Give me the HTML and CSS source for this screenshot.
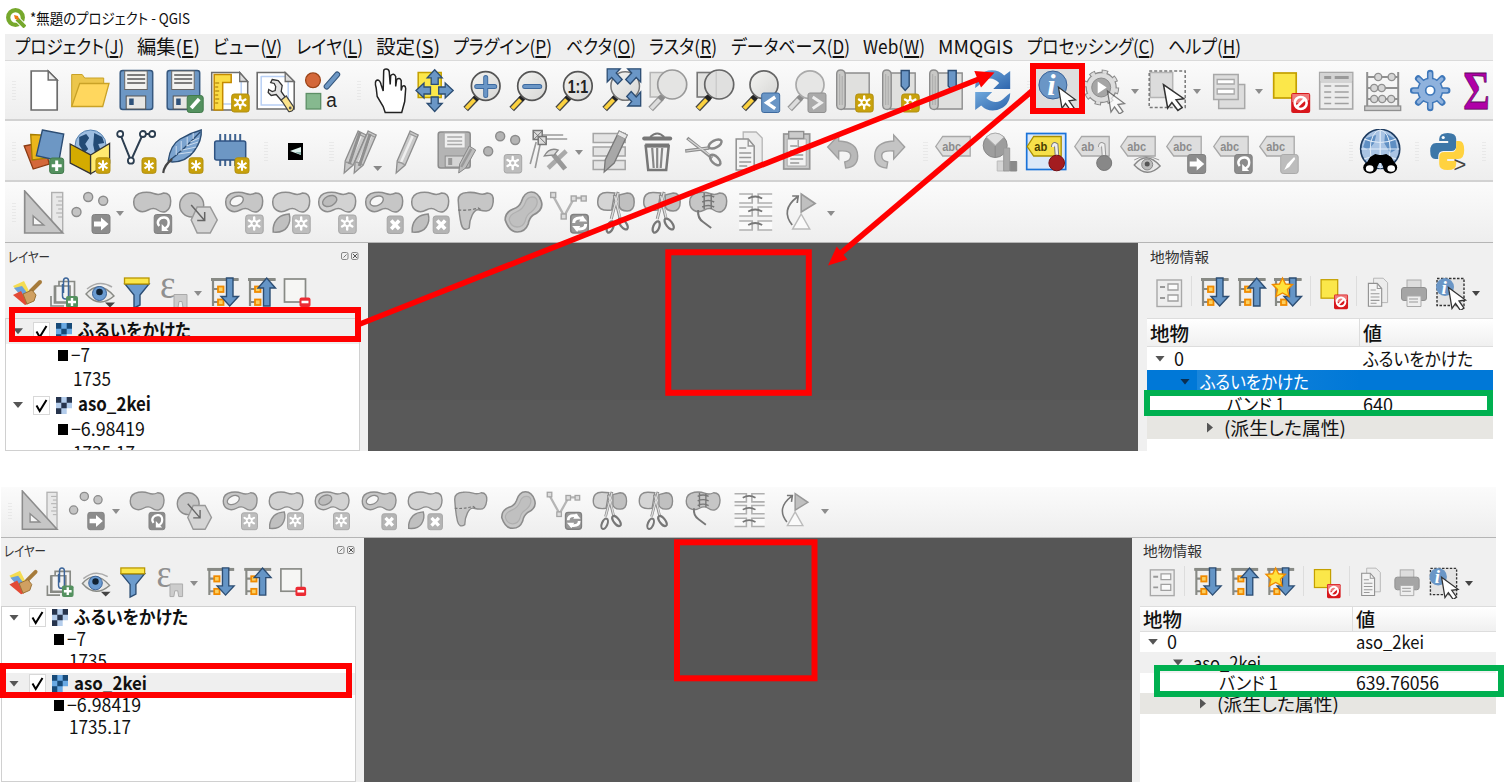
FILE: index.html
```html
<!DOCTYPE html>
<html lang="ja">
<head>
<meta charset="utf-8">
<title>QGIS</title>
<link rel="stylesheet" href="styles.css">
</head>
<body>
<svg class="defs" width="0" height="0">
<defs>
<linearGradient id="lens" x1="0" y1="0" x2="1" y2="1"><stop offset="0" stop-color="#f4f4f2"/><stop offset="1" stop-color="#d6d6d4"/></linearGradient>
<linearGradient id="ref" x1="0" y1="0" x2="1" y2="1"><stop offset="0" stop-color="#6fa8dc"/><stop offset="1" stop-color="#2f66ad"/></linearGradient>
<g id="gear8"><path d="M9 3v12M3.8 6l10.4 6M14.200 6l-10.400 6" stroke="#fff" stroke-width="2.4" stroke-linecap="round"/><circle cx="9" cy="9" r="3.600" fill="#fff"/></g>
<g id="b-new"><rect x=".5" y=".5" width="17.500" height="18" rx="2.500" fill="#c9a20c" stroke="#b08e10"/><use href="#gear8"/><circle cx="9" cy="9" r="1.700" fill="#c9a20c"/></g>
<g id="b-star"><rect x=".5" y=".5" width="14" height="15.500" rx="2.500" fill="#c9a20c" stroke="#b08e10"/><path d="M7.500 3v10.500M3 5.500l9 5.500M12 5.500l-9 5.500" stroke="#fff" stroke-width="2"/></g>
<g id="b-gnew"><rect x=".5" y=".5" width="17.500" height="18.500" rx="2.500" fill="#bdbdbd" stroke="#a6a6a6"/><use href="#gear8"/><circle cx="9" cy="9" r="1.700" fill="#bdbdbd"/></g>
<g id="b-gx"><rect x=".5" y=".5" width="16" height="17.500" rx="2.500" fill="#b4b4b4" stroke="#a6a6a6"/><path d="M4.500 5l8 8.500M12.500 5l-8 8.500" stroke="#fff" stroke-width="3.600"/></g>
<g id="b-move"><rect x=".5" y=".5" width="18" height="19" rx="2.500" fill="#8c8c8c" stroke="#808080"/><path d="M2.500 7.500h7v-4l7.500 6.500-7.500 6.500v-4h-7z" fill="#fff"/></g>
<g id="b-rot"><rect x=".5" y=".5" width="17.500" height="19" rx="2.500" fill="#8c8c8c" stroke="#808080"/><path d="M5.500 12q-2.500-3-.5-6t6-2.500 4 5-4 6" fill="none" stroke="#fff" stroke-width="2.400"/><path d="M8 10v7h7z" fill="#fff"/></g>
<g id="b-green"><rect x=".5" y=".5" width="14" height="15.500" rx="2.500" fill="#54915f" stroke="#427a4c"/><path d="M7.500 3v10.500M2.500 8.200h10" stroke="#fff" stroke-width="3"/></g>
<g id="b-red"><rect x="0" y="0" width="19" height="20" rx="2" fill="#d8171c"/><path d="M1 9q8 3 17-2v-6H1z" fill="#ef7b7b"/><circle cx="9.500" cy="10" r="6" fill="none" stroke="#fff" stroke-width="2.600"/><path d="M5.500 14l8-8" stroke="#fff" stroke-width="2.600"/></g>
<g id="cursor"><path d="M0 0l17 12.500-6.500 1 5 7-3.500 2.500-5-7-3.500 5z" fill="#fff" stroke="#333" stroke-width="1.300"/></g>
<g id="handle"><path d="M17.500 29.500L6.500 41" stroke="#444" stroke-width="6.400"/><path d="M15.500 31.500L7 40.500" stroke="#fcd23f" stroke-width="4"/><path d="M19.500 27.500l-4 4" stroke="#222" stroke-width="6"/></g>
<g id="ghandle"><path d="M17.500 29.500L6.500 41" stroke="#999" stroke-width="6.400"/><path d="M15.500 31.500L7 40.500" stroke="#ddd" stroke-width="4"/><path d="M19.500 27.500l-4 4" stroke="#8c8c8c" stroke-width="6"/></g>
<g id="floppy"><rect x="7" y="2.500" width="32.500" height="39" rx="2.500" fill="#6d97c4" stroke="#36587f" stroke-width="1.500"/><rect x="11.500" y="3" width="22.500" height="18.500" fill="#f2f2f0" stroke="#666"/><path d="M14 7h18M14 11h18M14 15h18" stroke="#555" stroke-width="1.700"/><rect x="13" y="28" width="19.500" height="13" fill="#e6e6e4" stroke="#555"/><rect x="16" y="30.500" width="4.500" height="6.500" fill="#2f527a"/></g>
<g id="scroll"><path d="M14 5h25v36H14z" fill="#e0e0de" stroke="#8c8c8c" stroke-width="1.400"/><path d="M6.500 6q0-4 4-4t4.500 4v31q0 4.500-4 4.500t-4.500-4z" fill="#c8c8c6" stroke="#8c8c8c" stroke-width="1.400"/><path d="M9.500 6v31M12 8v29" stroke="#aaa"/></g>
<path id="tag" d="M5.500 17.500l7-10h27.500v19.500h-27.500z" fill="#dedede" stroke="#a8a8a8" stroke-width="1.300"/>
<path id="blob" d="M4.500 12q0-8 9-9.500 6-1 11 1t10-.5q7 0 7 8t-5 10.500q-4 1.500-8-1.500t-9.500 0-10 .5-4.500-8.500z" stroke="#8c8c8c" stroke-width="1.500"/>
<g id="scis"><path d="M25 2l-7 27M21 5l6 24" stroke="#8c8c8c" stroke-width="3"/><path d="M25 3l-7 26M21.500 6l5.500 22" stroke="#ddd" stroke-width="1.400"/><ellipse cx="17" cy="37" rx="3" ry="6" transform="rotate(22 17 37)" fill="none" stroke="#777" stroke-width="2.300"/><ellipse cx="30" cy="34" rx="3" ry="6.500" transform="rotate(-38 30 34)" fill="none" stroke="#777" stroke-width="2.300"/></g>
<g id="pencil"><path d="M25 2l8 4-13 30-9 8 1-12z" fill="#c9c9c9" stroke="#8e8e8e" stroke-width="1.300"/><path d="M27.500 7l-12 27" stroke="#eee" stroke-width="2.500"/><path d="M12 33q4 0 8 3M24 4.500l8.500 4" fill="none" stroke="#999" stroke-width="1.300"/></g>
<g id="treebg"><path d="M3 3.500h27.500M5 4v26M5 13h5M5 26h5" stroke="#888a85" stroke-width="2.200" fill="none"/><path d="M3 3.500h27.500" stroke="#888a85" stroke-width="3"/><rect x="10" y="10.500" width="5.500" height="5.500" fill="#fcd060" stroke="#f08a00" stroke-width="1.800"/><rect x="10" y="23.500" width="5.500" height="5.500" fill="#fcd060" stroke="#f08a00" stroke-width="1.800"/></g>
<path id="adown" d="M18.500 2h6.500v18.500h5.500l-8.800 9.500-8.700-9.500h5.500z" fill="#6595c6" stroke="#2c4d73" stroke-width="1.400"/>
<g id="pages"><path d="M17 3h13l6 6v27H17z" fill="#ececec" stroke="#b5b5b5" stroke-width="1.300"/><path d="M10 10h12l6 7v24H10z" fill="#f4f4f4" stroke="#909090" stroke-width="1.500"/><path d="M22 10v7h6M13 19h7M13 24h12M13 28.500h12M13 33h12M13 37h8" fill="none" stroke="#999" stroke-width="1.400"/></g>
</defs>

<symbol id="new" viewBox="0 0 46 46"><path d="M10 3h17l9 9v30H10z" fill="#fff" stroke="#6c6c6c" stroke-width="1.700"/><path d="M27 3v9h9z" fill="#eee" stroke="#6c6c6c" stroke-width="1.500"/></symbol>
<symbol id="open" viewBox="0 0 46 46"><path d="M4.500 38V6.500h10.500l2.500 3.500h19v6L33 38z" fill="#ecc64c" stroke="#c9a227"/><path d="M12.500 15.500h29.300L35.500 38.500H4.500z" fill="#ffd75e" stroke="#c9a227" stroke-width="1.300"/></symbol>
<symbol id="save" viewBox="0 0 46 46"><use href="#floppy"/></symbol>
<symbol id="saveas" viewBox="0 0 46 46"><use href="#floppy"/><rect x="27" y="27.500" width="16" height="17" rx="2.500" fill="#54915f" stroke="#427a4c"/><path d="M31 40l8-9" stroke="#fff" stroke-width="3.800"/></symbol>
<symbol id="layout" viewBox="0 0 46 46"><path d="M5.500 4.500h28l8 9V42h-36z" fill="#fff" stroke="#6c6c6c" stroke-width="1.500"/><path d="M9 36h26V8" fill="none" stroke="#b9d0f5" stroke-width="1.500"/><path d="M33.500 4.500v9h8z" fill="#ddd" stroke="#6c6c6c" stroke-width="1.300"/><path d="M8 6.500h17v8h-8.500V42H8z" fill="#fbdc45" stroke="#c48a00" stroke-width="1.500"/><path d="M9 15h4M9 19h3M9 23h4M9 27h3M9 31h4M9 35h3" stroke="#a07000"/><use href="#b-new" x="25" y="25.500"/></symbol>
<symbol id="wrench" viewBox="0 0 46 46"><path d="M5 4.500h28l9 9V41H5z" fill="#fff" stroke="#6c6c6c" stroke-width="1.600"/><path d="M9 8.500h24M9 8v29h27V14" fill="none" stroke="#b9d0f5" stroke-width="1.500"/><path d="M33 4.500v9h9z" fill="#ddd" stroke="#6c6c6c" stroke-width="1.300"/><path d="M20 11.500l6 1 4 5-1 6 5 7-4 3-6-7-5 1-3-3 .5-3 3.500 2 3-1 .5-4-1.500-3-3.500-1z" fill="#e4e4e4" stroke="#333" stroke-width="1.300"/><path d="M29 32l5-4 7.500 11q0 5-5 4.500z" fill="#fbe38b" stroke="#444" stroke-width="1.300"/><circle cx="38" cy="40" r="1.400" fill="#555"/></symbol>
<symbol id="style" viewBox="0 0 46 46"><circle cx="13.800" cy="12.300" r="7.400" fill="#d4683a" stroke="#9c4418" stroke-width="1.300"/><path d="M27.500 18.500L38 6.500" stroke="#34567c" stroke-width="6" stroke-linecap="round"/><path d="M27.500 18.500L38 6.500" stroke="#6d97c4" stroke-width="4" stroke-linecap="round"/><rect x="7" y="25.500" width="14.500" height="15.500" fill="#86b98f" stroke="#5d8f66" stroke-width="1.300"/><text x="27" y="38.500" font-family="Liberation Sans" font-size="20" fill="#222" textLength="10.500" lengthAdjust="spacingAndGlyphs">a</text></symbol>
<symbol id="hand" viewBox="0 0 46 46"><path d="M10 20q-2-7 1-8 3 0 4 5l2 6 .500-20q0-2 2.500-2t3 2.500l1 13 .5-9q3-3 5 1v10l1-7q3-2.500 4.500 1v10l1-4q3-2 3.500 2l-1 13-3 11H19l-2-6-6-10z" fill="#fff" stroke="#222" stroke-width="1.500"/></symbol>
<symbol id="pan" viewBox="0 0 46 46"><rect x="6" y="4.500" width="23" height="25" fill="#fbe74a" stroke="#c4a000" stroke-width="1.500"/><g fill="#6a96c6" stroke="#2c4d73" stroke-width="1.300"><path d="M22.500 1.800l7.500 8h-4v6.500h-7V9.800h-4z"/><path d="M22.500 43.500l7.500-8h-4v-6.500h-7v6.500h-4z"/><path d="M3.800 22.500l8-7.500v4h6.500v7h-6.500v4z"/><path d="M41 22.500l-8-7.500v4h-6.500v7H33v4z"/></g></symbol>
<symbol id="zin" viewBox="0 0 46 46"><use href="#handle"/><circle cx="26.500" cy="18" r="14.300" fill="url(#lens)" stroke="#555" stroke-width="1.700"/><path d="M26.500 9.500v18M17.500 18.500h18" stroke="#3d6a9f" stroke-width="5" stroke-linecap="round"/><path d="M26.500 9.500v18M17.500 18.500h18" stroke="#6a96c6" stroke-width="3.200" stroke-linecap="round"/></symbol>
<symbol id="zout" viewBox="0 0 46 46"><use href="#handle"/><circle cx="26.800" cy="18" r="14.300" fill="url(#lens)" stroke="#555" stroke-width="1.700"/><path d="M19.500 18.500h15" stroke="#3d6a9f" stroke-width="5" stroke-linecap="round"/><path d="M19.500 18.500h15" stroke="#6a96c6" stroke-width="3.200" stroke-linecap="round"/></symbol>
<symbol id="zone" viewBox="0 0 46 46"><use href="#handle"/><circle cx="26.700" cy="18" r="14.300" fill="url(#lens)" stroke="#555" stroke-width="1.700"/><text x="16.500" y="24.500" font-family="Liberation Sans" font-weight="bold" font-size="19" fill="#222" textLength="20.500" lengthAdjust="spacingAndGlyphs">1:1</text></symbol>
<symbol id="zfull" viewBox="0 0 46 46"><use href="#handle"/><circle cx="27" cy="18" r="14.300" fill="url(#lens)" stroke="#777" stroke-width="1.500"/><g fill="#6a96c6" stroke="#2c4d73" stroke-width="1.300"><path d="M9 .8h13l-4 4.200 6 6.500-4.500 4.500-6-6.500-4.500 4.500z"/><path d="M42.500.8h-13l4 4.200-6 6.500 4.500 4.500 6-6.500 4.500 4.500z"/><path d="M42.500 38h-13l4-4.500-5-5 4.500-5 5 5.500 4.500-5z"/></g></symbol>
<symbol id="zsel" viewBox="0 0 46 46"><rect x="6" y="4.500" width="19" height="24.500" fill="#e2e2e0" stroke="#b5b5b5" stroke-width="1.500"/><use href="#ghandle"/><circle cx="28" cy="16.500" r="14.500" fill="#e4e4e3" stroke="#999" stroke-width="1.700"/></symbol>
<symbol id="zlay" viewBox="0 0 46 46"><rect x="6" y="4.500" width="19" height="24.500" fill="#e2e2e0" stroke="#777" stroke-width="1.600"/><use href="#handle"/><circle cx="28" cy="16.500" r="14.500" fill="#e0e0df" stroke="#666" stroke-width="1.700"/><path d="M25 3v27" stroke="#c2c2c2"/></symbol>
<symbol id="zlast" viewBox="0 0 46 46"><use href="#handle"/><circle cx="26.800" cy="16.800" r="14" fill="url(#lens)" stroke="#666" stroke-width="1.700"/><rect x="24.500" y="25" width="18" height="19.500" rx="2" fill="#6a96c6" stroke="#3d6a9f"/><path d="M38 29l-8.500 5.800 8.500 5.800" fill="none" stroke="#fff" stroke-width="3.400"/></symbol>
<symbol id="znext" viewBox="0 0 46 46"><use href="#ghandle"/><circle cx="26.800" cy="16.800" r="14" fill="#e6e6e5" stroke="#aaa" stroke-width="1.700"/><rect x="24.800" y="25" width="18" height="19.500" rx="2" fill="#aaa" stroke="#909090"/><path d="M29.500 29l8.500 5.800-8.500 5.800" fill="none" stroke="#eee" stroke-width="3"/></symbol>
<symbol id="nmap" viewBox="0 0 46 46"><use href="#scroll"/><use href="#b-new" x="25" y="25.500"/></symbol>
<symbol id="nbook" viewBox="0 0 46 46"><use href="#scroll"/><use href="#b-new" x="25" y="25.500"/><path d="M25 2.500h8V18l-4 4.500-4-4.500z" fill="#6a96c6" stroke="#2c4d73" stroke-width="1.400"/></symbol>
<symbol id="book" viewBox="0 0 46 46"><use href="#scroll"/><path d="M25 2.500h8V18l-4 4.500-4-4.500z" fill="#6a96c6" stroke="#2c4d73" stroke-width="1.400"/></symbol>
<symbol id="refresh" viewBox="0 0 46 46"><path d="M6 20q0-14 13-17.500Q29 1 35 7.500l6-4.500v18H24l6-6q-9-9-18 0-3 3-6 5z" fill="url(#ref)"/><path d="M41 25q0 13-13 17-10 2-16-4.500L6 42V24h17l-6 6q10 8 18 0 3-3 6-5z" fill="url(#ref)"/></symbol>
<symbol id="ident" viewBox="0 0 46 46"><circle cx="16.700" cy="17" r="14" fill="#6a96c6" stroke="#3a6298"/><text x="11" y="27" font-family="Liberation Serif" font-style="italic" font-weight="bold" font-size="30" fill="#fff">i</text><use href="#cursor" x="22.300" y="19.300"/></symbol>
<symbol id="gearrun" viewBox="0 0 46 46"><circle cx="19" cy="19.500" r="15.500" fill="none" stroke="#8c8c8c" stroke-width="5" stroke-dasharray="6.100 6.070"/><circle cx="19" cy="19.500" r="15" fill="#dcdcdc" stroke="#8c8c8c" stroke-width="1.300"/><circle cx="19" cy="19.500" r="15.500" fill="none" stroke="#dcdcdc" stroke-width="3" stroke-dasharray="4.100 8.070" stroke-dashoffset="-1"/><circle cx="19" cy="19.500" r="9.500" fill="#a5a5a5" stroke="#8c8c8c"/><path d="M15.500 13.500v12l9-6z" fill="#fff"/><use href="#cursor" x="25.300" y="23" opacity=".6"/></symbol>
<symbol id="select" viewBox="0 0 46 46"><rect x="6" y="4.500" width="22.500" height="25" fill="#dcdcdc" stroke="#b5b5b5" stroke-width="1.500"/><rect x="5" y="3" width="36" height="36.500" fill="none" stroke="#777" stroke-width="1.500" stroke-dasharray="3 2"/><g transform="translate(19.300 16.700) scale(1.200 1.120)"><use href="#cursor"/></g></symbol>
<symbol id="form" viewBox="0 0 46 46"><g fill="#ddd" stroke="#a8a8a8" stroke-width="1.500"><rect x="12.500" y="16.500" width="26" height="24"/><rect x="7.500" y="6.500" width="24.500" height="25"/></g><path d="M11 11.500h17v4.500H11zM11 21h17v5H11z" fill="#fff" stroke="#a8a8a8" stroke-width="1.300"/></symbol>
<symbol id="desel" viewBox="0 0 46 46"><rect x="5.500" y="5" width="22.500" height="25" fill="#fbe74a" stroke="#c4a000" stroke-width="1.700"/><use href="#b-red" x="23" y="25"/></symbol>
<symbol id="table" viewBox="0 0 46 46"><rect x="5.500" y="4.500" width="33" height="36.500" fill="#ececec" stroke="#a8a8a8" stroke-width="1.600"/><path d="M6 5h32v8H6z" fill="#d4d4d4"/><path d="M10 9.500h7M20.500 9.500h14" stroke="#999" stroke-width="3"/><path d="M10 18h7M10 24h7M10 29.500h7M10 35.500h7M20.500 18h14M20.500 24h14M20.500 29.500h14M20.500 35.500h14" stroke="#a0a0a0" stroke-width="1.500"/><path d="M6 14h32" stroke="#bbb"/></symbol>
<symbol id="abacus" viewBox="0 0 46 46"><path d="M7 4v35M38 4v35M7 9h31M7 20h31M7 31h31" stroke="#909090" stroke-width="2"/><rect x="4.500" y="38" width="36" height="4.500" fill="#ccc" stroke="#909090" stroke-width="1.300"/><g fill="#d6d6d6" stroke="#909090" stroke-width="1.400"><circle cx="18" cy="9" r="3.600"/><circle cx="31.500" cy="9" r="3.600"/><circle cx="14" cy="20" r="3.600"/><circle cx="21.500" cy="20" r="3.600"/><circle cx="14" cy="31" r="3.600"/><circle cx="22" cy="31" r="3.600"/><circle cx="31" cy="31" r="3.600"/></g></symbol>
<symbol id="gear" viewBox="0 0 46 46"><g stroke="#3f78ba" stroke-width="6.500" stroke-linecap="round"><path d="M23 5v35M6 22.500h34M11 10.500l24 24M35 10.500l-24 24"/></g><circle cx="23" cy="22.500" r="12.300" fill="#8fb2dd" stroke="#3f78ba" stroke-width="1.500"/><path d="M23 5.500v34M6.500 22.500h33M11.500 11l23 23M34.500 11l-23 23" stroke="#8fb2dd" stroke-width="3.500" stroke-linecap="round"/><circle cx="23" cy="22.500" r="4.500" fill="#fff" stroke="#3f78ba" stroke-width="1.700"/></symbol>
<symbol id="sigma" viewBox="0 0 46 46"><text x="10" y="40.500" font-family="Liberation Serif" font-weight="bold" font-size="54" fill="#b000a8" stroke="#5c0d5c" stroke-width=".8" textLength="26.500" lengthAdjust="spacingAndGlyphs">Σ</text></symbol>

<symbol id="addlay" viewBox="0 0 46 46"><path d="M3 17l20-4 5 22-16 5z" fill="#d4683a" stroke="#8c3c14" stroke-width="1.300"/><path d="M9.500 5.500l22 1v22L11 31z" fill="#eab61c" stroke="#a67c00" stroke-width="1.300"/><path d="M21.200 1l21.300 4-4.700 26.700-22.600-5z" fill="#6d97c4" stroke="#2c4d73" stroke-width="1.400"/><use href="#b-green" x="28" y="28.500"/></symbol>
<symbol id="gpkg" viewBox="0 0 46 46"><circle cx="23.400" cy="16.500" r="15.500" fill="#9dbde0" stroke="#5581b0"/><path d="M12 8l7-3 3 4-4 6 3 5-4 4-5-8zM27 4l8 4 2 6-6 1 2 5-5 5-2-9z" fill="#234b76"/><path d="M3 15l20.400 11v18.700L3 34z" fill="#d4ab00" stroke="#333" stroke-width="1.300"/><path d="M23.400 26l19-11.500V34l-19 10.700z" fill="#ffea70" stroke="#333" stroke-width="1.300"/><use href="#b-star" x="28.300" y="28.300"/></symbol>
<symbol id="vec" viewBox="0 0 46 46"><path d="M7 5l10.700 26.700L29.700 5H39" fill="none" stroke="#2c3e50" stroke-width="2"/><g fill="#fff" stroke="#2c3e50" stroke-width="1.800"><circle cx="7" cy="5" r="3"/><circle cx="17.700" cy="31.700" r="3"/><circle cx="29.700" cy="5" r="3"/><circle cx="39" cy="5" r="3"/></g><use href="#b-star" x="28.300" y="28.300"/></symbol>
<symbol id="feather" viewBox="0 0 46 46"><path d="M8 32Q10 16 20 10T41 1q1 10-7 21T12 33z" fill="#7ba3cf" stroke="#2c4d73" stroke-width="1.400"/><path d="M10 31Q22 22 40 3" fill="none" stroke="#2c4d73" stroke-width="1.300"/><path d="M18 25l14-2M22 21l14-3M26 17l12-4M30 13l9-4M16 26l0-9M21 22V12M27 17V8M33 10V4" stroke="#d4e2f2" stroke-width=".9"/><path d="M3 44q1-8 9-14" fill="none" stroke="#444" stroke-width="2.200"/><use href="#b-star" x="28.300" y="28.300"/></symbol>
<symbol id="chip" viewBox="0 0 46 46"><path d="M14 5v32M19 5v32M24 5v32M29 5v32M34 5v32" stroke="#3f6390" stroke-width="2"/><rect x="8.500" y="12" width="31" height="19" rx="2" fill="#6d97c4" stroke="#2f5382" stroke-width="1.500"/><use href="#b-star" x="28.300" y="28.300"/></symbol>
<symbol id="pencils" viewBox="0 0 46 46"><g transform="translate(-7 0)"><use href="#pencil"/></g><g transform="translate(3 0)"><use href="#pencil"/></g><path d="M20 3l-11 32M30 5l-11 32" stroke="#8f8f8f" stroke-width="3"/><path d="M33 37h9l-4.500 5z" fill="#888"/></symbol>
<symbol id="pen" viewBox="0 0 46 46"><use href="#pencil" x="-1"/></symbol>
<symbol id="saveed" viewBox="0 0 46 46"><rect x="5" y="3" width="32" height="36" rx="2.500" fill="#b4b4b4" stroke="#8c8c8c" stroke-width="1.500"/><rect x="11" y="4" width="21" height="15" fill="#efefef" stroke="#aaa"/><path d="M14 8h15M14 12h15M14 15.500h15" stroke="#aaa" stroke-width="1.500"/><rect x="12" y="27" width="19" height="11" fill="#d5d5d5" stroke="#8c8c8c"/><rect x="15" y="29" width="4" height="7" fill="#999"/><path d="M36 17l6.500 4-10 18-7 5 1-9z" fill="#bdbdbd" stroke="#888"/><path d="M38 20L28 38" stroke="#999" stroke-width="2.500"/></symbol>
<symbol id="addpt" viewBox="0 0 46 46"><g fill="#b4b4b4" stroke="#8c8c8c" stroke-width="1.400"><circle cx="9" cy="22.300" r="4.500"/><circle cx="21" cy="7.300" r="4.500"/><circle cx="36" cy="11" r="4.500"/></g><use href="#b-gnew" x="24.500" y="25"/></symbol>
<symbol id="vtx" viewBox="0 0 46 46"><path d="M15 6h22M15 10h26M10 13L4 35M14 15L9 39" stroke="#999" stroke-width="1.600"/><rect x="7" y="1.500" width="9" height="9" fill="#ddd" stroke="#777" stroke-width="1.500"/><rect x="12" y="7.500" width="8" height="8" fill="#ddd" stroke="#777" stroke-width="1.500"/><path d="M7 2l13 13M16 2L7 11" stroke="#777"/><path d="M40 22L22 39" stroke="#aaa" stroke-width="4.500"/><path d="M25 23l14 17" stroke="#999" stroke-width="5"/><path d="M18 27q5-9 14-6l-4 5z" fill="#ddd" stroke="#888" stroke-width="1.300"/></symbol>
<symbol id="multi" viewBox="0 0 46 46"><g fill="#e4e4e4" stroke="#a5a5a5" stroke-width="1.500"><rect x="6" y="4.500" width="32" height="9"/><rect x="6" y="18" width="32" height="9"/><rect x="6" y="31.500" width="32" height="9"/></g><path d="M32 2l8 4-13 28-10 9 1-12z" fill="#a8a8a8" stroke="#777" stroke-width="1.300"/><path d="M32 2l8 4-2 4-8-4z" fill="#e8e8e8" stroke="#999"/></symbol>
<symbol id="trash" viewBox="0 0 46 46"><path d="M16 8q7-7 14 0" fill="none" stroke="#777" stroke-width="2"/><path d="M10 9.500h26" stroke="#777" stroke-width="4" stroke-linecap="round"/><path d="M11.500 17h23L32 41H14z" fill="#f2f2f2" stroke="#777" stroke-width="2.500"/><path d="M11 16.500h24" stroke="#777" stroke-width="4"/><path d="M18 19l1.500 20M23 19v20M28 19l-1.500 20" stroke="#888" stroke-width="2.200"/></symbol>
<symbol id="cut" viewBox="0 0 46 46"><path d="M7 9l25 20M5 22l24-3" stroke="#909090" stroke-width="3.500"/><path d="M8 10l24 18M6 22l22-3" stroke="#d5d5d5" stroke-width="1.200"/><ellipse cx="35" cy="15" rx="7" ry="3.600" transform="rotate(-28 35 15)" fill="none" stroke="#888" stroke-width="2.500"/><ellipse cx="35" cy="31" rx="6.500" ry="3.500" transform="rotate(45 35 31)" fill="none" stroke="#888" stroke-width="2.500"/></symbol>
<symbol id="copy" viewBox="0 0 46 46"><use href="#pages"/></symbol>
<symbol id="paste" viewBox="0 0 46 46"><rect x="10.500" y="5" width="26" height="35" fill="#c9c9c9" stroke="#969696" stroke-width="1.700"/><path d="M14 10h19v27H14z" fill="#f3f3f3" stroke="#aaa"/><rect x="15.500" y="2.500" width="15" height="7" fill="#ccc" stroke="#909090" stroke-width="1.400"/><path d="M17 17h7M17 22h13M17 26h13M17 30h13M17 34h9M25 11v7h8" fill="none" stroke="#999" stroke-width="1.300"/></symbol>
<symbol id="undo" viewBox="0 0 46 46"><path d="M8.500 18l11-12v6q19 1 19 15 0 11-12 12l-1-6q6-1 6-6.500T19.500 22v8z" fill="#b9b9b9" stroke="#a0a0a0" stroke-width="1.400"/></symbol>
<symbol id="redo" viewBox="0 0 46 46"><path d="M38.500 18l-11-12v6q-19 1-19 15 0 11 12 12l1-6q-6-1-6-6.500t12-4.500v8z" fill="#c4c4c4" stroke="#a0a0a0" stroke-width="1.400"/></symbol>
<symbol id="abc" viewBox="0 0 46 46"><use href="#tag"/><text x="12" y="22" class="ic" textLength="19" lengthAdjust="spacingAndGlyphs">abc</text></symbol>
<symbol id="diag" viewBox="0 0 46 46"><circle cx="19" cy="16.500" r="12" fill="#9d9d9d" stroke="#888"/><path d="M19 16.500L10 8q9-8 18 0z" fill="#e0e0e0" stroke="#aaa"/><path d="M19 17v12" stroke="#888"/><path d="M21 32h7v10h-7z" fill="#d5d5d5" stroke="#bbb"/><path d="M27.500 19h6v23h-6z" fill="#aaa" stroke="#999"/><path d="M34 32.500h6.500V42H34z" fill="#8a8a8a" stroke="#888"/></symbol>
<symbol id="abpin" viewBox="0 0 46 46"><rect x="4.500" y="4.500" width="39" height="36" fill="#dbe8f8" stroke="#1a73d9" stroke-width="1.700"/><path d="M5 17.500l6.500-10H39v19.500H11.500z" fill="#f6e04a" stroke="#a98e00" stroke-width="1.300"/><text x="12" y="22" class="ic dark" textLength="13" lengthAdjust="spacingAndGlyphs">ab</text><path d="M31 18q0-4 3-2l1 14" fill="none" stroke="#777" stroke-width="4.500"/><path d="M31 18q0-4 3-2l1 14" fill="none" stroke="#eee" stroke-width="2.500"/><circle cx="34.500" cy="34" r="7.800" fill="#a31c20" stroke="#741014"/></symbol>
<symbol id="gpin" viewBox="0 0 46 46"><use href="#tag"/><text x="12" y="22" class="ic" textLength="13" lengthAdjust="spacingAndGlyphs">ab</text><path d="M31 18q0-4 3-2l1 14" fill="none" stroke="#999" stroke-width="4.500"/><path d="M31 18q0-4 3-2l1 14" fill="none" stroke="#eee" stroke-width="2.500"/><circle cx="35" cy="34" r="7.500" fill="#888" stroke="#777"/></symbol>
<symbol id="abceye" viewBox="0 0 46 46"><use href="#tag"/><text x="12" y="22" class="ic" textLength="19" lengthAdjust="spacingAndGlyphs">abc</text><path d="M19 36q12-15 26 1-13 13-26-1z" fill="#e9e9e9" stroke="#888" stroke-width="1.300"/><circle cx="32" cy="35.500" r="5.500" fill="#bbb" stroke="#888"/><circle cx="32" cy="35" r="2.500" fill="#555"/><path d="M19 31q11-7 25 0" fill="none" stroke="#999"/></symbol>
<symbol id="abcmove" viewBox="0 0 46 46"><use href="#tag"/><text x="12" y="22" class="ic" textLength="19" lengthAdjust="spacingAndGlyphs">abc</text><use href="#b-move" x="26" y="25"/></symbol>
<symbol id="abcrot" viewBox="0 0 46 46"><use href="#tag"/><text x="12" y="22" class="ic" textLength="19" lengthAdjust="spacingAndGlyphs">abc</text><use href="#b-rot" x="26" y="25"/></symbol>
<symbol id="abced" viewBox="0 0 46 46"><use href="#tag"/><text x="12" y="22" class="ic" textLength="19" lengthAdjust="spacingAndGlyphs">abc</text><rect x="26.500" y="25.500" width="17.500" height="19" rx="2.500" fill="#bdbdbd" stroke="#aaa"/><path d="M30 41l3-6 7-7 1 2-6 8z" fill="#fff"/></symbol>
<symbol id="globe" viewBox="0 0 46 46"><circle cx="23" cy="20" r="19.500" fill="#a9c4e4" stroke="#1d3b60" stroke-width="1.700"/><path d="M9 9l10-3-2 8-6 7-5-3zM28 4l10 6 2 10-7 4-6-10z" fill="#5f8fc3"/><path d="M23 1v38M4 20h38M7 10q16 7 32 0M7 30q16-7 32 0" fill="none" stroke="#e4eef9" stroke-width="1.200"/><ellipse cx="23" cy="20" rx="10" ry="19" fill="none" stroke="#e4eef9"/><path d="M18 25l4 1h3l4-1 5 3 6 10H26l-2-4h-2l-2 4H7l6-10z" fill="#000"/><ellipse cx="13" cy="38.500" rx="7" ry="6" fill="#000"/><ellipse cx="33" cy="38.500" rx="7" ry="6" fill="#000"/><ellipse cx="12.500" cy="39.500" rx="3.800" ry="3.200" fill="#fff"/><ellipse cx="34" cy="39.500" rx="3.800" ry="3.200" fill="#fff"/></symbol>
<symbol id="python" viewBox="0 0 46 46"><g transform="translate(1 0)"><path d="M14 10q0-6 8.500-6T31 10v7q0 5-5 5h-8q-5 0-5 6v2h-3q-5 0-5-8t6-8h12v-2h-9z" fill="#3d77a8"/><circle cx="18" cy="8.500" r="1.600" fill="#fff"/><path d="M31 12h3q5 0 5 9t-6 9H22v2h9v3q0 6-8.500 6T14 35v-7q0-5 5-5h8q4 0 4-6z" fill="#ffd23f"/><text x="28" y="43" font-family="Liberation Mono" font-size="22" fill="#444">&gt;</text></g></symbol>

<symbol id="ruler" viewBox="0 0 46 46"><rect x="30.500" y="2.500" width="11" height="39" fill="#e8e8e8" stroke="#b0b0b0" stroke-width="1.400"/><path d="M35 7h6M37 11h4M35 15h6M37 19h4M35 23h6M37 27h4" stroke="#aaa"/><path d="M3.500 1l38 42h-38z" fill="#c6c6c6" stroke="#8c8c8c" stroke-width="1.700"/><path d="M12 26l10.500 9H12z" fill="#f5f5f5" stroke="#8c8c8c" stroke-width="1.500"/></symbol>
<symbol id="ptmove" viewBox="0 0 46 46"><g fill="#c4c4c4" stroke="#8c8c8c" stroke-width="1.400"><circle cx="9.300" cy="22" r="4.500"/><circle cx="21" cy="7" r="4.500"/><circle cx="36" cy="10.700" r="4.500"/></g><use href="#b-move" x="24.300" y="24"/></symbol>
<symbol id="rotf" viewBox="0 0 46 46"><use href="#blob" fill="#c6c6c6"/><use href="#b-rot" x="24.500" y="24"/></symbol>
<symbol id="simp" viewBox="0 0 46 46"><circle cx="16.500" cy="15" r="12" fill="#c6c6c6" stroke="#8c8c8c" stroke-width="1.500"/><path d="M22 17h13l7 13-7 13H22l-6-13z" fill="#d5d5d5" stroke="#999" stroke-width="1.500"/><path d="M16 15l13 15M29.500 22v8.500H22" fill="none" stroke="#666" stroke-width="1.500"/></symbol>
<symbol id="aring" viewBox="0 0 46 46"><use href="#blob" fill="#c6c6c6"/><ellipse cx="15.500" cy="11" rx="7" ry="4.500" transform="rotate(-25 15.500 11)" fill="#f7f7f7" stroke="#8c8c8c" stroke-width="1.400"/><use href="#b-gnew" x="24" y="24.500"/></symbol>
<symbol id="apart" viewBox="0 0 46 46"><use href="#blob" fill="#d2d2d2"/><path d="M5 38q2-13 16-14 2 7-2 13T5 42z" fill="#c0c0c0" stroke="#8c8c8c" stroke-width="1.500"/><use href="#b-gnew" x="24" y="24.500"/></symbol>
<symbol id="fring" viewBox="0 0 46 46"><use href="#blob" fill="#d2d2d2"/><ellipse cx="15.500" cy="11" rx="7.500" ry="5" transform="rotate(-25 15.500 11)" fill="#bcbcbc" stroke="#8c8c8c" stroke-width="1.400"/><use href="#b-gnew" x="24" y="24.500"/></symbol>
<symbol id="dring" viewBox="0 0 46 46"><use href="#blob" fill="#c6c6c6"/><ellipse cx="15.500" cy="11" rx="7" ry="4.500" transform="rotate(-25 15.500 11)" fill="#f7f7f7" stroke="#8c8c8c" stroke-width="1.400"/><use href="#b-gx" x="25.500" y="25.500"/></symbol>
<symbol id="dpart" viewBox="0 0 46 46"><use href="#blob" fill="#d2d2d2"/><path d="M5 38q2-13 16-14 2 7-2 13T5 42z" fill="#c0c0c0" stroke="#8c8c8c" stroke-width="1.500"/><use href="#b-gx" x="25.500" y="25.500"/></symbol>
<symbol id="resh" viewBox="0 0 46 46"><path d="M5 10q0-7 9-7.500 6-.5 11 1t9-.5q7 0 6 9t-7 9q-3 0-7-1t-7 5-3 13q-6 4-8-4T5 10z" fill="#c6c6c6" stroke="#8c8c8c" stroke-width="1.500"/><path d="M5 20q10 1 20-2l3 2" fill="none" stroke="#777" stroke-width="1.300" stroke-dasharray="3 2"/></symbol>
<symbol id="offs" viewBox="0 0 46 46"><path d="M5 30q0-8 8-11 6-2 8-7 3-10 10-10t10 9-8 14q-4 3-5 9-3 8-11 8T5 30z" fill="#c6c6c6" stroke="#8c8c8c" stroke-width="1.700"/><path d="M9 30q0-5 7-8 7-3 9-9 2-6 7-6t5 5-6 10q-5 3-6 9-2 6-8 6t-8-7z" fill="#c0c0c0" stroke="#b0b0b0" stroke-width="1.300"/></symbol>
<symbol id="rev" viewBox="0 0 46 46"><path d="M7 6l11 20L28 8h11" fill="none" stroke="#b5b5b5" stroke-width="2.500"/><g fill="#ddd" stroke="#a5a5a5" stroke-width="1.400"><rect x="4.500" y="2.500" width="5" height="5"/><rect x="15" y="24" width="5" height="5"/><rect x="25" y="6" width="5" height="5"/><rect x="35" y="6" width="5" height="5"/></g><rect x="24.500" y="24.500" width="17.500" height="18.500" rx="3" fill="#999" stroke="#808080" stroke-width="1.500"/><path d="M27.500 33q0-5 6-5h4M39.500 34q0 5-6 5h-4" fill="none" stroke="#fff" stroke-width="3"/><path d="M36 25.500l5 6h-8zM31 42l-5-6h8z" fill="#fff"/></symbol>
<symbol id="split" viewBox="0 0 46 46"><path d="M21.500 3l-3 17q-14 2-14-8t10-9.500z" fill="#d5d5d5" stroke="#8c8c8c" stroke-width="1.500"/><path d="M26 5l8-2q7 0 7 9t-7 9-8-5z" fill="#c0c0c0" stroke="#8c8c8c" stroke-width="1.500"/><use href="#scis"/></symbol>
<symbol id="merge" viewBox="0 0 46 46"><use href="#blob" fill="#c6c6c6"/><path d="M17 7q6-3 12 0M17 12q6-3 12 0M17 17q6-3 12 0M19 3v16M26 4v15" fill="none" stroke="#777" stroke-width="1.500"/><path d="M13 20q-1 8 5 12l8 6" fill="none" stroke="#777" stroke-width="2"/></symbol>
<symbol id="mattr" viewBox="0 0 46 46"><path d="M7 4h13v9H7M40 4H26v9h14M7 17h13v9H7M40 17H26v9h14M7 31h13v9H7M40 31H26v9h14" fill="#fafafa" stroke="#b0b0b0" stroke-width="1.700"/><path d="M16 8.500q7-4 14 0M16 21.500q7-4 14 0M16 35q7-4 14 0" fill="none" stroke="#777" stroke-width="1.800"/></symbol>
<symbol id="rsym" viewBox="0 0 46 46"><path d="M14 35Q2 20 19 7M14 6l6 0-1 7" fill="none" stroke="#777" stroke-width="1.700"/><path d="M23 4l14 9.500L23 22z" fill="#c0c0c0" stroke="#999" stroke-width="1.600"/><path d="M23 24l8.500 15h-17z" fill="#fafafa" stroke="#bbb" stroke-width="1.500"/></symbol>

<symbol id="brush" viewBox="0 0 34 34"><path d="M3 10l11-5 6 12-5 8z" fill="#f4dc52"/><path d="M4 12l8-2 6 8-4 5z" fill="#6aa0dc"/><path d="M3 19l8-4 7 13-3 1z" fill="#e34a35"/><path d="M30 6l-9 9" stroke="#a67b3b" stroke-width="4" stroke-linecap="round"/><path d="M13 18l9-4 4 5-2 6-7 3z" fill="#d0a061" stroke="#9a7134" stroke-width="1"/></symbol>
<symbol id="group" viewBox="0 0 34 34"><g fill="#f3f3f3" stroke="#888a85" stroke-width="1.700"><path d="M12 5.500h15.500V24H12z"/><path d="M4 20v10h13M7.500 9.500V27H21"/><path d="M8.500 10H23v16H8.500z"/></g><path d="M15.500 8v12q0 3 3 3t3-3V5q0-3-2.500-3t-2.500 3v12" fill="none" stroke="#3c659a" stroke-width="1.500"/><rect x="19" y="20" width="12" height="12" rx="2" fill="#54915f"/><path d="M25 22v8M21 26h8" stroke="#fff" stroke-width="2.400"/></symbol>
<symbol id="eye" viewBox="0 0 34 34"><path d="M3 18q13-15 28 2-15 13-28-2z" fill="#e8e8e6" stroke="#888a85" stroke-width="1.400"/><path d="M4 13q12-10 25-2" fill="none" stroke="#aaa" stroke-width="1.500"/><circle cx="16.500" cy="17.500" r="7" fill="#6a9bd1" stroke="#3a6298"/><circle cx="16.500" cy="16" r="3.300" fill="#123"/><path d="M22 26.500h10l-5 5z" fill="#444"/></symbol>
<symbol id="funnel" viewBox="0 0 34 34"><path d="M5 8h24l-9 11v10l-6 3V19z" fill="#6d9ccd" stroke="#2c4d73" stroke-width="1.400"/><rect x="4.500" y="2" width="24.500" height="6" fill="#fbe74a" stroke="#b89600" stroke-width="1.300"/></symbol>
<symbol id="eps" viewBox="0 0 34 34"><text x="4" y="21.500" font-family="Liberation Serif" font-size="41" fill="#909090" textLength="15.500" lengthAdjust="spacingAndGlyphs">ε</text><path d="M18 18.500h13v13h-4l-1-6h-3l-1 6h-4z" fill="#ccc" stroke="#aaa"/></symbol>
<symbol id="down" viewBox="0 0 34 34"><use href="#treebg"/><use href="#adown"/></symbol>
<symbol id="up" viewBox="0 0 34 34"><use href="#treebg"/><path d="M18.500 30h6.500V12h5.500l-8.800-10-8.700 10h5.500z" fill="#6595c6" stroke="#2c4d73" stroke-width="1.400"/></symbol>
<symbol id="rem" viewBox="0 0 34 34"><rect x="3.500" y="3" width="21" height="23" fill="#f6f6f4" stroke="#888a85" stroke-width="1.700"/><rect x="18.500" y="21.500" width="11" height="9.500" rx="2" fill="#ec2b33"/><path d="M20.500 26h7" stroke="#fff" stroke-width="2.600"/></symbol>
<symbol id="pform" viewBox="0 0 34 34"><rect x="5" y="4" width="24.500" height="26.500" fill="#eee" stroke="#a8a8a8" stroke-width="1.400"/><path d="M16 8h10v6H16zM16 19h10v6H16z" fill="#fafafa" stroke="#a0a0a0" stroke-width="1.300"/><path d="M8 11h5M8 22h5" stroke="#999" stroke-width="2"/></symbol>
<symbol id="star" viewBox="0 0 34 34"><use href="#treebg"/><use href="#adown"/><path d="M11.500 2l3 6 7 .5-5 5 1.500 7-6.500-3.500-6.500 3.500 1.500-7-5-5 7-.5z" fill="#ffe23c" stroke="#f08a00" stroke-width="1.400"/></symbol>
<symbol id="print" viewBox="0 0 34 34"><rect x="10" y="4" width="14" height="9" fill="#ddd" stroke="#aaa"/><rect x="4.500" y="11.500" width="25" height="13" rx="2.500" fill="#a5a5a5" stroke="#909090"/><path d="M10 20h14v10.500H10z" fill="#eee" stroke="#aaa"/><path d="M12 23h9M12 26h9" stroke="#999"/></symbol>
<symbol id="pident" viewBox="0 0 34 34"><rect x="3" y="2.500" width="27" height="27" fill="#e4e4e4" stroke="#333" stroke-width="1.400" stroke-dasharray="2.500 1.500"/><circle cx="11" cy="11" r="9" fill="#6a96c6"/><text x="7.500" y="17.500" font-family="Liberation Serif" font-style="italic" font-weight="bold" font-size="19" fill="#fff">i</text><use href="#cursor" x="14.500" y="11.500"/></symbol>
<symbol id="raster" viewBox="0 0 16 16" preserveAspectRatio="none"><path d="M0 0h16v10.700H10.700V16H0z" fill="var(--lo)"/><path d="M0 0h5.300v5.300H0zM10.700 0H16v5.300h-5.300zM5.300 5.300h5.400v5.400H5.300zM0 10.700h5.300V16H0z" fill="var(--hi)"/></symbol>
<symbol id="check" viewBox="0 0 17 19"><rect x=".5" y=".5" width="16" height="18" fill="#fff" stroke="#d8d8d8"/><path d="M3.500 9.500l3.200 5.500L13.500 4" fill="none" stroke="#000" stroke-width="2"/></symbol>
</svg>

<main class="stage">
<section class="shot first">
  <header class="title"><svg class="logo" viewBox="0 0 20 20"><circle cx="9.500" cy="9.500" r="7.300" fill="none" stroke="#76a82c" stroke-width="4.300"/><path d="M9 9l9.500 9.500" stroke="#fff" stroke-width="6"/><path d="M11 11l8 8" stroke="#76a82c" stroke-width="4"/><path d="M8 7l4 1 1 4-4-1z" fill="#ee7913"/></svg><span data-w="160">*無題のプロジェクト - QGIS</span></header>
  <nav class="menu">
    <span data-w="109">プロジェクト(<u>J</u>)</span><span data-w="63">編集(<u>E</u>)</span><span data-w="69">ビュー(<u>V</u>)</span><span data-w="67">レイヤ(<u>L</u>)</span><span data-w="64">設定(<u>S</u>)</span><span data-w="99">プラグイン(<u>P</u>)</span><span data-w="70">ベクタ(<u>O</u>)</span><span data-w="68">ラスタ(<u>R</u>)</span><span data-w="119">データベース(<u>D</u>)</span><span data-w="62">Web(<u>W</u>)</span><span data-w="75">MMQGIS</span><span data-w="128">プロセッシング(<u>C</u>)</span><span data-w="73">ヘルプ(<u>H</u>)</span>
  </nav>
  <div class="bar b1">
    <i class="grip g0"></i><svg><use href="#new"/></svg><svg><use href="#open"/></svg><svg><use href="#save"/></svg><svg><use href="#saveas"/></svg><svg><use href="#layout"/></svg><svg><use href="#wrench"/></svg><svg><use href="#style"/></svg>
    <i class="grip g1"></i><svg><use href="#hand"/></svg><svg><use href="#pan"/></svg><svg><use href="#zin"/></svg><svg><use href="#zout"/></svg><svg><use href="#zone"/></svg><svg><use href="#zfull"/></svg><svg><use href="#zsel"/></svg><svg><use href="#zlay"/></svg><svg><use href="#zlast"/></svg><svg><use href="#znext"/></svg><svg><use href="#nmap"/></svg><svg><use href="#nbook"/></svg><svg><use href="#book"/></svg><svg><use href="#refresh"/></svg>
    <i class="grip g1"></i><svg class="active"><use href="#ident"/></svg><svg><use href="#gearrun"/></svg><i class="dd"></i><svg><use href="#select"/></svg><i class="dd"></i><svg><use href="#form"/></svg><i class="dd"></i><svg><use href="#desel"/></svg><svg><use href="#table"/></svg><svg><use href="#abacus"/></svg><svg><use href="#gear"/></svg><svg><use href="#sigma"/></svg>
  </div>
  <div class="bar b2">
    <i class="grip g0"></i><svg><use href="#addlay"/></svg><svg><use href="#gpkg"/></svg><svg><use href="#vec"/></svg><svg><use href="#feather"/></svg><svg><use href="#chip"/></svg>
    <i class="grip g2"></i><svg class="plug" viewBox="0 0 15 17"><path d="M0 0h15v17H0z"/><path d="M2 8l11-4v8z" fill="#dff3ee"/><path d="M7 9l6 3v-3z" fill="#8fb7b0"/></svg><i class="grip g3"></i><svg><use href="#pencils"/></svg><svg><use href="#pen"/></svg><svg><use href="#saveed"/></svg><svg><use href="#addpt"/></svg><svg><use href="#vtx"/></svg><i class="dd"></i><svg><use href="#multi"/></svg><svg><use href="#trash"/></svg><svg><use href="#cut"/></svg><svg><use href="#copy"/></svg><svg><use href="#paste"/></svg><svg><use href="#undo"/></svg><svg><use href="#redo"/></svg>
    <i class="grip g4"></i><svg><use href="#abc"/></svg><svg><use href="#diag"/></svg><svg><use href="#abpin"/></svg><svg><use href="#gpin"/></svg><svg><use href="#abceye"/></svg><svg><use href="#abcmove"/></svg><svg><use href="#abcrot"/></svg><svg><use href="#abced"/></svg>
    <i class="grip g5"></i><svg><use href="#globe"/></svg><i class="grip g1"></i><svg><use href="#python"/></svg><i class="grip g1"></i>
  </div>
  <div class="bar b3">
    <i class="grip g0"></i><svg><use href="#ruler"/></svg><svg><use href="#ptmove"/></svg><i class="dd"></i><svg><use href="#rotf"/></svg><svg><use href="#simp"/></svg><svg><use href="#aring"/></svg><svg><use href="#apart"/></svg><svg><use href="#fring"/></svg><svg><use href="#dring"/></svg><svg><use href="#dpart"/></svg><svg><use href="#resh"/></svg><svg><use href="#offs"/></svg><svg><use href="#rev"/></svg><svg><use href="#split"/></svg><svg><use href="#split"/></svg><svg><use href="#merge"/></svg><svg><use href="#mattr"/></svg><svg><use href="#rsym"/></svg><i class="dd"></i>
  </div>
  <div class="work">
    <aside class="layers">
      <div class="cap"><span data-w="42">レイヤー</span><svg class="wb" viewBox="0 0 18 8"><rect x=".5" y=".5" width="6.500" height="7" rx="1.500" fill="none" stroke="#888"/><path d="M2.500 5.500l3-3" stroke="#777"/><rect x="10.500" y=".5" width="6.500" height="7" rx="1.500" fill="none" stroke="#888"/><path d="M12 2l4 4M16 2l-4 4" stroke="#555"/></svg></div>
      <div class="tools"><svg><use href="#brush"/></svg><svg><use href="#group"/></svg><svg><use href="#eye"/></svg><svg><use href="#funnel"/></svg><svg><use href="#eps"/></svg><i class="dd"></i><svg><use href="#down"/></svg><svg><use href="#up"/></svg><svg><use href="#rem"/></svg></div>
      <div class="tree">
        <div class="row hl"><i class="exp"></i><svg class="chk"><use href="#check"/></svg><svg class="ras sel"><use href="#raster"/></svg><b data-w="113">ふるいをかけた</b></div>
        <div class="row leaf"><i class="sq"></i><span data-w="19">−7</span></div>
        <div class="row leaf2"><span data-w="38">1735</span></div>
        <div class="row"><i class="exp"></i><svg class="chk"><use href="#check"/></svg><svg class="ras"><use href="#raster"/></svg><b data-w="73">aso_2kei</b></div>
        <div class="row leaf"><i class="sq"></i><span data-w="74">−6.98419</span></div>
        <div class="row leaf2"><span data-w="62">1735.17</span></div>
      </div>
    </aside>
    <div class="canvas"></div>
    <aside class="info">
      <div class="cap"><span data-w="59">地物情報</span></div>
      <div class="tools"><svg><use href="#pform"/></svg><i class="vs"></i><svg><use href="#down"/></svg><svg><use href="#up"/></svg><svg><use href="#star"/></svg><i class="vs"></i><svg viewBox="0 0 46 46"><use href="#desel" width="46" height="46"/></svg><i class="vs thin"></i><svg viewBox="0 0 46 46"><use href="#copy" width="46" height="46"/></svg><svg><use href="#print"/></svg><svg><use href="#pident"/></svg><i class="dd"></i></div>
      <div class="grid">
        <div class="hd"><b data-w="39">地物</b></div><div class="hd v"><b data-w="19">値</b></div>
        <div class="c d0"><i class="exp"></i><span data-w="10">0</span></div><div class="c v"><span data-w="110">ふるいをかけた</span></div>
        <div class="c d1 blue lite"><i class="exp"></i><span data-w="109">ふるいをかけた</span></div><div class="c v blue"></div>
        <div class="c d2"><span data-w="59">バンド 1</span></div><div class="c v"><span data-w="30">640</span></div>
        <div class="c d3 gr"><i class="exp r"></i><span data-w="122">(派生した属性)</span></div><div class="c v gr"></div>
      </div>
    </aside>
  </div>
</section>

<section class="shot second">
  <div class="bar b3">
    <i class="grip g0"></i><svg><use href="#ruler"/></svg><svg><use href="#ptmove"/></svg><i class="dd"></i><svg><use href="#rotf"/></svg><svg><use href="#simp"/></svg><svg><use href="#aring"/></svg><svg><use href="#apart"/></svg><svg><use href="#fring"/></svg><svg><use href="#dring"/></svg><svg><use href="#dpart"/></svg><svg><use href="#resh"/></svg><svg><use href="#offs"/></svg><svg><use href="#rev"/></svg><svg><use href="#split"/></svg><svg><use href="#split"/></svg><svg><use href="#merge"/></svg><svg><use href="#mattr"/></svg><svg><use href="#rsym"/></svg><i class="dd"></i>
  </div>
  <div class="work">
    <aside class="layers">
      <div class="cap"><span data-w="42">レイヤー</span><svg class="wb" viewBox="0 0 18 8"><rect x=".5" y=".5" width="6.500" height="7" rx="1.500" fill="none" stroke="#888"/><path d="M2.500 5.500l3-3" stroke="#777"/><rect x="10.500" y=".5" width="6.500" height="7" rx="1.500" fill="none" stroke="#888"/><path d="M12 2l4 4M16 2l-4 4" stroke="#555"/></svg></div>
      <div class="tools"><svg><use href="#brush"/></svg><svg><use href="#group"/></svg><svg><use href="#eye"/></svg><svg><use href="#funnel"/></svg><svg><use href="#eps"/></svg><i class="dd"></i><svg><use href="#down"/></svg><svg><use href="#up"/></svg><svg><use href="#rem"/></svg></div>
      <div class="tree">
        <div class="row"><i class="exp"></i><svg class="chk"><use href="#check"/></svg><svg class="ras"><use href="#raster"/></svg><b data-w="114">ふるいをかけた</b></div>
        <div class="row leaf"><i class="sq"></i><span data-w="19">−7</span></div>
        <div class="row leaf2"><span data-w="38">1735</span></div>
        <div class="row hl"><i class="exp"></i><svg class="chk"><use href="#check"/></svg><svg class="ras sel"><use href="#raster"/></svg><b class="ul" data-w="73">aso_2kei</b></div>
        <div class="row leaf"><i class="sq"></i><span data-w="74">−6.98419</span></div>
        <div class="row leaf2"><span data-w="62">1735.17</span></div>
      </div>
    </aside>
    <div class="canvas"></div>
    <aside class="info">
      <div class="cap"><span data-w="59">地物情報</span></div>
      <div class="tools"><svg><use href="#pform"/></svg><i class="vs"></i><svg><use href="#down"/></svg><svg><use href="#up"/></svg><svg><use href="#star"/></svg><i class="vs"></i><svg viewBox="0 0 46 46"><use href="#desel" width="46" height="46"/></svg><i class="vs thin"></i><svg viewBox="0 0 46 46"><use href="#copy" width="46" height="46"/></svg><svg><use href="#print"/></svg><svg><use href="#pident"/></svg><i class="dd"></i></div>
      <div class="grid">
        <div class="hd"><b data-w="39">地物</b></div><div class="hd v"><b data-w="19">値</b></div>
        <div class="c d0"><i class="exp"></i><span data-w="10">0</span></div><div class="c v"><span data-w="68">aso_2kei</span></div>
        <div class="c d1 pale"><i class="exp"></i><span data-w="68">aso_2kei</span></div><div class="c v pale"></div>
        <div class="c d2"><span data-w="59">バンド 1</span></div><div class="c v"><span data-w="83">639.76056</span></div>
        <div class="c d3 gr"><i class="exp r"></i><span data-w="122">(派生した属性)</span></div><div class="c v gr"></div>
      </div>
    </aside>
  </div>
</section>

<svg class="marks" viewBox="0 0 1504 782">
  <g fill="none" stroke="#f00" stroke-width="6">
    <rect x="1033" y="66" width="49" height="45"/>
    <rect x="12" y="310" width="346" height="29"/>
    <rect x="668.300" y="252.300" width="140.500" height="140.500"/>
    <rect x="3" y="666" width="346" height="29"/>
    <rect x="677" y="542.300" width="137.500" height="136"/>
  </g>
  <g fill="none" stroke="#00b050" stroke-width="6">
    <rect x="1147" y="393" width="343" height="20"/>
    <rect x="1157" y="668" width="344" height="26"/>
  </g>
  <g stroke="#f00" stroke-width="5.600" fill="#f00">
    <path d="M360 324L979 79"/><path d="M1032 91L840 254"/>
    <path d="M994.500 72.500L974.300 71 981 87.500zM828 265.500l8.700-19 10.800 13z" stroke="none"/>
  </g>
</svg>
</main>
<script src="fit.js"></script>
</body>
</html>
```

FILE: styles.css
```css
* { box-sizing: border-box; }
body { margin: 0; background: #fff; color: #111; font-family: "Noto Sans CJK JP", "Noto Sans", sans-serif; font-feature-settings: "palt"; }
.defs { position: absolute; }
.stage { position: relative; width: 1504px; height: 782px; overflow: hidden; }
.marks { position: absolute; left: 0; top: 0; width: 1504px; height: 782px; }
[data-w] { display: inline-block; flex: none; white-space: nowrap; transform-origin: 0 50%; }
.ic { font: bold 13px "Liberation Sans", sans-serif; fill: #8c8c8c; }
.ic.dark { fill: #4a4000; }

.shot { display: flex; flex-direction: column; overflow: hidden; }
.first { width: 1488px; height: 451px; margin-left: 5px; }
.second { width: 1495px; height: 295px; margin: 36px 0 0 1px; }

.title { display: flex; align-items: center; height: 34px; padding: 2px 0 0 1px; gap: 4px; font-size: 15px; line-height: 22px; flex: none; }
.logo { width: 20px; height: 20px; flex: none; }
.menu { display: flex; align-items: center; gap: 13.400px; height: 27px; padding: 0 0 3px 9.500px; background: #efefef; font-size: 19px; line-height: 23px; flex: none; border-bottom: 1px solid #dadada; }
.menu u { text-underline-offset: 2px; text-decoration-thickness: 1.500px; }

.bar { display: flex; align-items: flex-start; flex: none; background: linear-gradient(#fbfbfb, #eeeeee); border-bottom: 2px solid #d2d2d2; }
.bar svg { width: 46.400px; height: 46px; flex: none; }
.b1 { height: 60px; padding-top: 7px; }
.b2 { height: 61px; padding-top: 8px; }
.b3 { height: 61px; padding-top: 8px; border-bottom: 1px solid #b5b5b5; }
.bar .active { background: linear-gradient(#dedede, #dedede) no-repeat 0 0 / 46px 43px; }
.bar .plug { width: 15px; height: 17px; margin: 14px 9px 0; }
.grip { flex: none; height: 46px; background: radial-gradient(#cfcfcf 25%, transparent 40%) 0 0 / 2px 3px; background-clip: content-box; padding: 12px 0; }
.g0 { width: 15.500px; padding-left: 7px; padding-right: 4.500px; }
.g1 { width: 20.600px; padding-left: 11.500px; padding-right: 5px; }
.g2 { width: 27px; padding-left: 12px; padding-right: 11px; }
.g3 { width: 27.500px; padding-left: 17px; padding-right: 6px; }
.g4 { width: 17.500px; padding-left: 11px; padding-right: 2px; }
.g5 { width: 56.500px; padding-left: 48px; padding-right: 4px; }
.dd { flex: none; width: 15.400px; height: 46px; display: flex; align-items: center; justify-content: center; padding-right: 2px; }
.dd::before { content: ""; border: 4.500px solid transparent; border-top: 5px solid #8c8c8c; border-bottom: 0; }

.work { display: flex; flex: 1; min-height: 0; background: #f0f0f0; overflow: hidden; }
.canvas { width: 770px; flex: none; background: linear-gradient(#565656 157px, #595959 157px); }
.layers { width: 363px; flex: none; padding-right: 8px; display: flex; flex-direction: column; }
.info { width: 355px; flex: none; padding-left: 9px; display: flex; flex-direction: column; }
.cap { display: flex; align-items: center; justify-content: space-between; height: 26px; padding-left: 3px; font-size: 14px; line-height: 20px; color: #333; flex: none; }
.cap span { padding-bottom: 1px; }
.wb { width: 18px; height: 8px; margin-right: 1px; }
.tools { display: flex; height: 49px; padding: 7px 0 0 5px; flex: none; }
.tools svg { width: 34px; height: 34px; margin-right: 2.500px; flex: none; }
.tools .dd { width: 15.500px; height: 34px; padding-right: 4px; }
.info .dd::before { border-top-color: #444; }
.vs { flex: none; width: 9.500px; height: 30px; background: linear-gradient(#ddd, #ddd) no-repeat 2px 0 / 1px 30px; }
.vs.thin { width: 7px; }

.tree { flex: 1; background: #fff; border: 1px solid #d0d0d0; font-size: 18.500px; line-height: 21px; overflow: hidden; }
.row { display: flex; align-items: center; height: 24.600px; padding-left: 7px; }
.row > b, .row > span { padding-bottom: 3px; }
.hl { background: #efefef; }
.exp { flex: none; width: 10px; height: 6px; background: #555; clip-path: polygon(0 0, 100% 0, 50% 100%); }
.exp.r { width: 6px; height: 10px; clip-path: polygon(0 0, 100% 50%, 0 100%); }
.chk { width: 17px; height: 19px; margin-left: 9.500px; flex: none; }
.ras { width: 16px; height: 17px; margin: 0 5.500px 0 6.500px; flex: none; --lo: #b4cdec; --hi: #26344d; }
.ras.sel { --lo: #6aaae4; --hi: #174a78; }
.leaf { padding-left: 52px; }
.leaf2 { padding-left: 66.500px; }
.sq { width: 10px; height: 11px; margin-right: 3px; margin-bottom: 1px; background: #000; flex: none; }
.ul { text-decoration: underline; text-underline-offset: 2px; }

.grid { flex: 1; display: grid; grid-template-columns: 213px 1fr; grid-template-rows: 29px repeat(4, 23px) 1fr; background: #fff; font-size: 18.500px; line-height: 20px; overflow: hidden; }
.hd { display: flex; align-items: center; padding: 0 0 0 3px; background: linear-gradient(#fff, #f0f0f0); border: 1px solid #ddd; border-left: 0; font-size: 19.500px; }
.hd b { font-weight: 500; }
.c { display: flex; align-items: center; white-space: nowrap; min-width: 0; }
.c > span { padding-bottom: 1px; }
.v { padding-left: 3px; border-right: 0; }
.d0 { padding-left: 8px; } .d0 .exp { margin-right: 9px; }
.d1 { padding-left: 33px; } .d1 .exp { margin-right: 10px; }
.d2 { padding-left: 79px; }
.d3 { padding-left: 60px; } .d3 .exp { margin-right: 11px; }
.blue { background: #0078d7; color: #fff; } .blue .exp { background: #0b2f52; }
.lite { background: linear-gradient(90deg, #0078d7 50px, #1a86dc 50px, #0078d7 100%); }
.gr { background: #e7e6e2; }
.pale { background: #f0f0f0; }

.second .b3 { height: 51px; padding-top: 3px; }
.second .b3 svg { width: 46.280px; height: 42px; }
.second .b3 .dd, .second .b3 .grip { height: 42px; }
.second .canvas { width: 768.500px; background: linear-gradient(#565656 142px, #595959 142px); }
.second .layers { width: 362.500px; }
.second .info { width: 364px; padding-left: 8px; }
.second .cap { height: 24px; }
.second .tools { height: 43.500px; padding-top: 4px; }
.second .tools svg { height: 33px; }
.second .tree { font-size: 18px; }
.second .row { height: 22px; }
.second .grid { grid-template-rows: 26px repeat(4, 20.600px) 1fr; font-size: 18px; line-height: 20px; }
```

FILE: fit.js
```js
document.querySelectorAll('[data-w]').forEach(function (el) {
  var want = parseFloat(el.dataset.w), have = el.getBoundingClientRect().width;
  el.style.transform = 'scaleX(' + want / have + ')';
  el.style.marginRight = (want - have) + 'px';
});
```
